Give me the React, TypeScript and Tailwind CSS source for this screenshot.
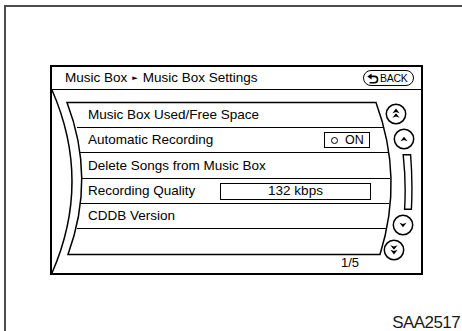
import React from "react";

function CircleArrow({ dir, double }: { dir: "up" | "down"; double?: boolean }) {
  const up = dir === "up";
  const head = (y: number) =>
    up
      ? `M11 ${y} L14.6 ${y + 4.6} L11 ${y + 3.3} L7.4 ${y + 4.6} Z`
      : `M11 ${y + 4.6} L14.6 ${y} L11 ${y + 1.3} L7.4 ${y} Z`;
  return (
    <svg width="22" height="22" viewBox="0 0 22 22" className="block">
      <circle cx="11" cy="11" r="9.7" fill="none" stroke="black" strokeWidth="1.5" />
      {double ? (
        <>
          <path d={head(up ? 5.6 : 6.2)} fill="black" />
          <path d={head(up ? 10.2 : 10.8)} fill="black" />
        </>
      ) : (
        <path d={head(8.7)} fill="black" />
      )}
    </svg>
  );
}

function BackButton() {
  return (
    <div className="flex h-[16px] w-[51px] items-center gap-[1px] rounded-full border-[1.5px] border-black pl-[3px]">
      <svg width="12" height="11" viewBox="0 0 12 11" className="block">
        <path d="M0.3 3.4 L4.6 0.4 L4.6 6.4 Z" fill="black" />
        <path d="M4 3.4 H7.4 A3.2 3.2 0 0 1 7.4 9.8 H2.6" fill="none" stroke="black" strokeWidth="1.6" />
      </svg>
      <span className="text-[10.5px] leading-none tracking-[-0.3px]">BACK</span>
    </div>
  );
}

export default function App() {
  return (
    <div className="h-[331px] w-[462px] overflow-hidden bg-white pl-[4px] pt-[5px] font-['Liberation_Sans',Arial,sans-serif] text-black">
      <div className="flex h-full flex-col border-l-2 border-t-2 border-[#4d4d4d] pl-[44px] pr-[2px] pt-[58px]">
        {/* screen frame */}
        <div className="flex h-[210px] w-[373px] flex-col border-2 border-black">
          <div className="flex h-[23px] shrink-0 items-center justify-between border-b-[1.5px] border-black pl-[13px] pr-[7px]">
            <div className="flex items-center text-[13.5px] leading-none">
              <span>Music Box</span>
              <span className="mx-[5px] font-['DejaVu_Sans',sans-serif] text-[7px]">►</span>
              <span>Music Box Settings</span>
            </div>
            <BackButton />
          </div>

          <div className="relative flex flex-1">
            <svg className="pointer-events-none absolute inset-0 h-full w-full overflow-visible" viewBox="0 0 369 182" preserveAspectRatio="none">
              <path d="M0 0 Q40 91 0 182" fill="none" stroke="black" strokeWidth="1.5" />
              <path
                d="M15 12.5 L324 12.5 Q352 88 328 163.5 L16 163.5 Q44 88 15 12.5 Z"
                fill="none"
                stroke="black"
                strokeWidth="1.5"
              />
            </svg>

            <div className="flex w-[331px] flex-col pt-[13px] text-[13.5px] leading-none">
              <div className="ml-[25px] flex h-[25px] items-center border-b-[1.5px] border-black pl-[11px]">
                Music Box Used/Free Space
              </div>
              <div className="-mr-[5px] ml-[28px] flex h-[25px] items-center border-b-[1.5px] border-black pl-[8px] pr-[18px]">
                <span>Automatic Recording</span>
                <div className="ml-auto flex h-[16px] w-[46px] items-center border-[1.5px] border-black pl-[6px]">
                  <span className="h-[7px] w-[7px] rounded-full border-[1.3px] border-black" />
                  <span className="ml-[7px] text-[12.5px]">ON</span>
                </div>
              </div>
              <div className="-mr-[7px] ml-[30px] flex h-[26px] items-center border-b-[1.5px] border-black pl-[6px]">
                Delete Songs from Music Box
              </div>
              <div className="-mr-[6px] ml-[28px] flex h-[25px] items-center border-b-[1.5px] border-black pl-[8px] pr-[18px]">
                <span>Recording Quality</span>
                <div className="ml-auto flex h-[17px] w-[151px] items-center justify-center border-[1.5px] border-black">
                  132 kbps
                </div>
              </div>
              <div className="-mr-[4px] ml-[25px] flex h-[25px] items-center border-b-[1.5px] border-black pl-[11px]">
                CDDB Version
              </div>
              <div className="h-[24px]" />
              <div className="mt-[2px] pr-[24px] text-right text-[13px] leading-[15px]">1/5</div>
            </div>

            <div className="flex flex-col pt-[13px]">
              <div className="ml-[2px]">
                <CircleArrow dir="up" double />
              </div>
              <div className="ml-[10px] mt-[3px]">
                <CircleArrow dir="up" />
              </div>
              <div className="ml-[19px] mt-[4px]">
                <svg width="11" height="56" viewBox="0 0 11 56" className="block">
                  <path d="M1.2 0.8 H8.6 Q10.8 28 9.4 55.2 H2.6 Q4.2 28 1.2 0.8 Z" fill="none" stroke="black" strokeWidth="1.4" />
                </svg>
              </div>
              <div className="ml-[9px] mt-[4px]">
                <CircleArrow dir="down" />
              </div>
              <div className="ml-[0px] mt-[3px]">
                <CircleArrow dir="down" double />
              </div>
            </div>
          </div>
        </div>

        <div className="mt-auto self-end text-[17px] leading-[17px] tracking-[-0.6px] text-[#1a1a1a]">SAA2517</div>
      </div>
    </div>
  );
}
